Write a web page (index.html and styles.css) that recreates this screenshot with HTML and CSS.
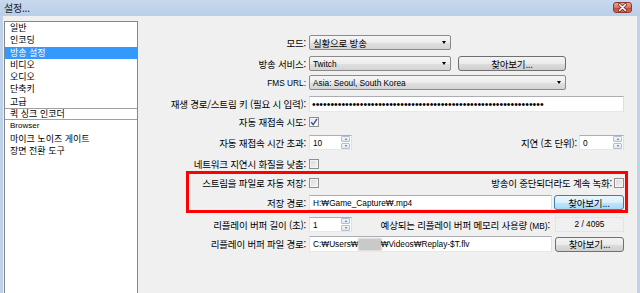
FILE: index.html
```html
<!DOCTYPE html>
<html lang="ko">
<head>
  <meta charset="UTF-8" />
  <title>설정...</title>
  <link rel="stylesheet" href="styles.css">
</head>
<body>
  <div class="window">
    <div class="titlebar">
      <span class="title">설정...</span>
      <span class="close">
        <svg width="19" height="11" viewBox="0 0 19 11">
          <path d="M6.5 2.5 L12.5 8.5 M12.5 2.5 L6.5 8.5" stroke="#6b1d1d" stroke-width="3" stroke-linecap="round"/>
          <path d="M6.5 2.5 L12.5 8.5 M12.5 2.5 L6.5 8.5" stroke="#fff" stroke-width="1.6" stroke-linecap="round"/>
        </svg>
      </span>
    </div>

    <div class="main">
      <ul class="nav">
        <li>일반</li>
        <li>인코딩</li>
        <li class="selected">방송 설정</li>
        <li>비디오</li>
        <li>오디오</li>
        <li>단축키</li>
        <li>고급</li>
        <li class="boxed">퀵 싱크 인코더</li>
        <li class="latin">Browser</li>
        <li>마이크 노이즈 게이트</li>
        <li>장면 전환 도구</li>
      </ul>

      <div class="panel">
        <div class="row">
          <label class="lbl">모드:</label>
          <div class="combo w142">실황으로 방송<span class="arrow"></span></div>
        </div>
        <div class="row mt6">
          <label class="lbl">방송 서비스:</label>
          <div class="combo w142 latin">Twitch<span class="arrow"></span></div>
          <button class="btn w108 ml7">찾아보기...</button>
        </div>
        <div class="row mt4">
          <label class="lbl latin">FMS URL:</label>
          <div class="combo w257 latin">Asia: Seoul, South Korea<span class="arrow"></span></div>
        </div>
        <div class="row mt6 tall">
          <label class="lbl">재생 경로/스트림 키 (필요 시 입력):</label>
          <div class="edit w315 dots">•••••••••••••••••••••••••••••••••••••••••••••••••••••••••••••••</div>
        </div>
        <div class="row mt4 short">
          <label class="lbl">자동 재접속 시도:</label>
          <span class="check checked">
            <svg width="8" height="8" viewBox="0 0 8 8"><path d="M1.2 4.2 L3.2 6.6 L7 0.8" fill="none" stroke="#3a4f9c" stroke-width="1.4"/></svg>
          </span>
        </div>
        <div class="row mt7">
          <label class="lbl">자동 재접속 시간 초과:</label>
          <div class="spin w43"><span class="latin">10</span><span class="spin-btns"><i class="up"></i><i class="down"></i></span></div>
          <label class="lbl-free">지연 (초 단위):</label>
          <div class="spin w45"><span class="latin">0</span><span class="spin-btns"><i class="up"></i><i class="down"></i></span></div>
        </div>
        <div class="row mt8 short">
          <label class="lbl">네트워크 지연시 화질을 낮춤:</label>
          <span class="check"></span>
        </div>

        <div class="recbox">
          <div class="row first">
            <label class="lbl">스트림을 파일로 자동 저장:</label>
            <span class="check"></span>
            <label class="lbl-free">방송이 중단되더라도 계속 녹화:</label>
            <span class="check"></span>
          </div>
          <div class="row mt4">
            <label class="lbl">저장 경로:</label>
            <div class="edit w243 latin">H:₩Game_Capture₩.mp4</div>
            <button class="btn focus w70 ml2">찾아보기...</button>
          </div>
        </div>

        <div class="row mt4">
          <label class="lbl">리플레이 버퍼 길이 (초):</label>
          <div class="spin w43"><span class="latin">1</span><span class="spin-btns"><i class="up"></i><i class="down"></i></span></div>
          <label class="lbl-free">예상되는 리플레이 버퍼 메모리 사용량 <span class="latin">(MB)</span>:</label>
          <div class="readonly w69 latin">2 / 4095</div>
        </div>
        <div class="row mt4 tall">
          <label class="lbl">리플레이 버퍼 파일 경로:</label>
          <div class="edit w243 latin">C:₩Users₩<span class="blur"></span>₩Videos₩Replay-$T.flv</div>
          <button class="btn w69 ml3">찾아보기...</button>
        </div>
      </div>
    </div>
  </div>
</body>
</html>
```

FILE: styles.css
```css
body { margin: 0; font-family: "Noto Sans CJK KR", sans-serif; font-size: 9.5px; letter-spacing: -0.2px; color: #000; }
.latin { font-family: "Liberation Sans", Arial, sans-serif; font-size: 8.3px; letter-spacing: 0; }

.window { width: 640px; height: 293px; overflow: hidden; background: #bfd2ea; }
.titlebar { height: 16px; display: flex; justify-content: space-between; padding: 0 8px 0 4px; background: linear-gradient(#c8d9ee, #b9cee8); }
.title { font-size: 10px; line-height: 16px; color: #1a1a1a; }
.close { margin-top: 2px; width: 19px; height: 11px; box-sizing: border-box; border: 1px solid #8c3a32; border-radius: 3px; background: linear-gradient(#e9a594, #d5705f 50%, #c2432f 51%, #d66a4f); display: flex; }
.close svg { margin: -1px; }

.main { display: flex; height: 277px; margin: 0 3px; background: #f0f0f0; }

.nav { list-style: none; margin: 5px 0 0 1px; padding: 0; width: 134px; height: 300px; box-sizing: border-box; border: 1px solid #828790; background: #fff; flex-shrink: 0; font-size: 9px; letter-spacing: 0; }
.nav li { height: 12.3px; line-height: 12.3px; padding-left: 5px; white-space: nowrap; box-sizing: border-box; }
.nav li.selected { background: #3399ff; color: #fff; }
.nav li.boxed { border-top: 1px solid #a0a0a0; border-bottom: 1px solid #a0a0a0; line-height: 10.3px; }
.nav li.latin { font-size: 8px; }

.panel { margin-left: 4px; padding-top: 19px; width: 482px; flex-shrink: 0; }

.row { display: flex; align-items: center; height: 15px; white-space: nowrap; }
.row.tall { height: 16px; }
.row.short { height: 12px; }
.mt4 { margin-top: 4px; }
.mt6 { margin-top: 6px; }
.mt7 { margin-top: 7px; }
.mt8 { margin-top: 8px; }
.ml2 { margin-left: 2px; }
.ml3 { margin-left: 3px; }
.ml7 { margin-left: 7px; }

.lbl { width: 167px; padding-right: 3px; box-sizing: border-box; text-align: right; flex-shrink: 0; }
.lbl-free { margin-left: auto; padding-right: 2px; }

.w43 { width: 43px; }
.w45 { width: 45px; }
.w69 { width: 69px; }
.w70 { width: 70px; }
.w108 { width: 108px; }
.w142 { width: 142px; }
.w243 { width: 243px; }
.w257 { width: 257px; }
.w315 { width: 315px; }

.combo { display: flex; align-items: center; height: 15px; box-sizing: border-box; padding-left: 3px; border: 1px solid #8a8a8a; border-radius: 2px; background: linear-gradient(#f6f6f6, #ececec 50%, #e0e0e0 51%, #d4d4d4); }
.arrow { margin-left: auto; margin-right: 4px; width: 0; height: 0; border-left: 2.5px solid transparent; border-right: 2.5px solid transparent; border-top: 3px solid #000; }

.btn { height: 15px; box-sizing: border-box; padding: 0; border: 1px solid #707070; border-radius: 3px; background: linear-gradient(#f3f3f3, #ebebeb 50%, #dddddd 51%, #cfcfcf); font: inherit; letter-spacing: -0.2px; color: #000; line-height: 12px; }
.btn.focus { border-color: #3c7fb1; background: linear-gradient(#eaf6fd, #d9f0fc 50%, #bee6fd 51%, #a7d9f5); }

.edit { display: flex; align-items: center; height: 15px; box-sizing: border-box; padding-left: 3px; background: #fff; border: 1px solid; border-color: #abadb3 #dbdfe6 #e3e9ef #e2e3ea; overflow: hidden; }
.row.tall .edit { height: 16px; }
.dots { font-family: "Liberation Sans", Arial, sans-serif; font-size: 10.5px; letter-spacing: 0; padding-left: 2px; }
.blur { display: inline-block; width: 22px; height: 11px; background: #c9c9c9; box-shadow: 0 0 2px 1px #d4d4d4; }

.spin { display: flex; align-items: center; height: 15px; box-sizing: border-box; padding-left: 3px; background: #fff; border: 1px solid; border-color: #abadb3 #dbdfe6 #e3e9ef #e2e3ea; }
.spin-btns { margin-left: auto; margin-right: 1px; width: 9px; height: 13px; display: flex; flex-direction: column; gap: 1px; }
.spin-btns i { flex: 1; box-sizing: border-box; border: 1px solid #b2bfd0; border-radius: 1px; background: linear-gradient(#f4f7fb, #dfe7f1); display: flex; justify-content: center; align-items: center; }
.spin-btns i::after { content: ""; width: 0; height: 0; border-left: 1.5px solid transparent; border-right: 1.5px solid transparent; }
.spin-btns .up::after { border-bottom: 2px solid #4b6a9e; }
.spin-btns .down::after { border-top: 2px solid #4b6a9e; }

.check { width: 10px; height: 10px; box-sizing: border-box; border: 1px solid #8e8f8f; background: linear-gradient(135deg, #d6d6d6, #f6f6f6); box-shadow: inset 0 0 0 1px #f4f4f4; display: flex; align-items: center; justify-content: center; flex-shrink: 0; }
.check.checked { background: linear-gradient(135deg, #dde4ef, #fafbfd); }

.recbox { margin: 1px -4px 0 44px; border: 3px solid #f00; padding-right: 1px; }
.recbox .lbl { width: 120px; }
.recbox .row.first { height: 17px; }

.readonly { height: 15px; box-sizing: border-box; margin-left: 3px; border: 1px solid #e4e4e4; background: #f0f0f0; text-align: center; line-height: 13px; }
```
